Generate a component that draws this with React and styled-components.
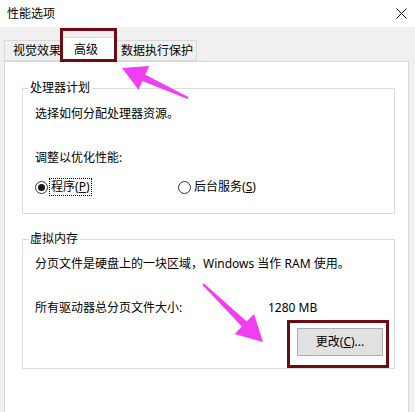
import React from "react";
import styled, { createGlobalStyle } from "styled-components";

const GlobalStyle = createGlobalStyle`
html, body {
  margin: 0;
  padding: 0;
  background: #f0f0f0;
}
body {
  font-family: "Segoe UI", "Noto Sans", "Noto Sans CJK SC", sans-serif;
  font-size: 12px;
  color: #000;
}
`;

function arrowPoints([tx, ty], [px, py], headLen, headWidth, tailW, neckW) {
  const dx = px - tx;
  const dy = py - ty;
  const len = Math.hypot(dx, dy);
  const ux = dx / len;
  const uy = dy / len;
  const nx = -uy;
  const ny = ux;
  const bx = px - ux * headLen;
  const by = py - uy * headLen;
  const pts = [
    [tx + nx * tailW / 2, ty + ny * tailW / 2],
    [bx + nx * neckW / 2, by + ny * neckW / 2],
    [bx + nx * headWidth / 2, by + ny * headWidth / 2],
    [px, py],
    [bx - nx * headWidth / 2, by - ny * headWidth / 2],
    [bx - nx * neckW / 2, by - ny * neckW / 2],
    [tx - nx * tailW / 2, ty - ny * tailW / 2],
  ];
  return pts.map((p) => p.map((v) => v.toFixed(1)).join(",")).join(" ");
}

function Radio({ checked, label, hotkey, focused }) {
  return (
    <RadioItem>
      <RadioCircle>{checked && <RadioDot />}</RadioCircle>
      <RadioLabel $focused={focused}>
        {label}(<u>{hotkey}</u>)
      </RadioLabel>
    </RadioItem>
  );
}

export default function App() {
  return (
    <>
      <GlobalStyle />
      <Window>
        <TitleBar>
          <Title>性能选项</Title>
          <svg width="11" height="11" viewBox="0 0 11 11">
            <path d="M0.5 0.5 L10.5 10.5 M10.5 0.5 L0.5 10.5" stroke="#111" strokeWidth="1" />
          </svg>
        </TitleBar>
        <Body>
          <Tabs>
            <Tab $w={61} $pl={8}>视觉效果</Tab>
            <Tab $w={56} $pl={12} $active>高级</Tab>
            <Tab $w={81} $pl={4}>数据执行保护</Tab>
          </Tabs>
          <Panel>
            <Group $pt={16} $pb={17}>
              <Legend>处理器计划</Legend>
              <Line>选择如何分配处理器资源。</Line>
              <Line $mt={26}>调整以优化性能:</Line>
              <RadioRow>
                <Radio checked label="程序" hotkey="P" focused />
                <Radio label="后台服务" hotkey="S" />
              </RadioRow>
            </Group>
            <Group $mt={25} $pt={15} $pb={12}>
              <Legend>虚拟内存</Legend>
              <Line>分页文件是硬盘上的一块区域，Windows 当作 RAM 使用。</Line>
              <SizeRow>
                <span>所有驱动器总分页文件大小:</span>
                <span>1280 MB</span>
              </SizeRow>
              <Button>
                更改(<u>C</u>)...
              </Button>
            </Group>
          </Panel>
        </Body>
        <Overlay width="415" height="412" viewBox="0 0 415 412">
          <rect x="61.5" y="29.5" width="54" height="31" fill="none" stroke="#6d0c14" strokeWidth="3" />
          <rect x="288.5" y="321.5" width="99" height="45" fill="none" stroke="#6d0c14" strokeWidth="3" />
          <polygon points={arrowPoints([188, 98], [122, 68], 24, 26, 2, 7)} fill="#f23ef2" />
          <polygon points={arrowPoints([203, 284], [263, 342], 26, 28, 2, 7)} fill="#f23ef2" />
        </Overlay>
      </Window>
    </>
  );
}

const Window = styled.div`
position: relative;
width: 415px;
height: 412px;
overflow: hidden;
display: flex;
flex-direction: column;
background: #f0f0f0;`

const TitleBar = styled.div`
height: 27px;
flex-shrink: 0;
background: #fff;
display: flex;
align-items: center;
justify-content: space-between;
padding: 0 8px 0 7px;
box-sizing: border-box;`

const Title = styled.span`
font-size: 12px;
line-height: 16px;`

const Body = styled.div`
flex: 1;
display: flex;
flex-direction: column;
padding: 0 6px 0 4px;`

const Tabs = styled.div`
height: 34px;
display: flex;
align-items: flex-end;
position: relative;
z-index: 1;`

const Tab = styled.div`
position: relative;
z-index: ${(p) => (p.$active ? 2 : 1)};
width: ${(p) => p.$w}px;
height: ${(p) => (p.$active ? 25 : 21)}px;
margin-bottom: ${(p) => (p.$active ? -1 : 0)}px;
margin-left: ${(p) => (p.$active ? -4 : 0)}px;
margin-right: ${(p) => (p.$active ? -1 : 0)}px;
box-sizing: border-box;
border: 1px solid #d9d9d9;
border-bottom: ${(p) => (p.$active ? "none" : "1px solid #d9d9d9")};
background: ${(p) => (p.$active ? "#fff" : "#f0f0f0")};
display: flex;
align-items: center;
padding-left: ${(p) => p.$pl}px;
padding-top: ${(p) => (p.$active ? 0 : 1)}px;
line-height: 16px;
white-space: nowrap;`

const Panel = styled.div`
flex: 1;
background: #fff;
border: 1px solid #d9d9d9;
border-bottom: none;
padding: 26px 13px 0 17px;`

const Group = styled.div`
position: relative;
margin-top: ${(p) => p.$mt || 0}px;
border: 1px solid #dcdcdc;
padding: ${(p) => p.$pt}px 11px ${(p) => p.$pb}px 12px;
display: flex;
flex-direction: column;`

const Legend = styled.span`
position: absolute;
top: -9px;
left: 6px;
padding: 0 2px 0 1px;
background: #fff;
line-height: 16px;`

const Line = styled.div`
line-height: 18px;
margin-top: ${(p) => p.$mt || 0}px;
white-space: nowrap;`

const RadioRow = styled.div`
margin-top: 11px;
display: grid;
grid-template-columns: 143px auto;
height: 18px;
align-items: center;`

const RadioItem = styled.div`
display: flex;
align-items: center;`

const RadioCircle = styled.span`
width: 13px;
height: 13px;
box-sizing: border-box;
border: 1px solid #333;
border-radius: 50%;
display: flex;
align-items: center;
justify-content: center;
margin-right: 2px;`

const RadioDot = styled.span`
width: 7px;
height: 7px;
border-radius: 50%;
background: #1a1a1a;`

const RadioLabel = styled.span`
line-height: 16px;
padding: 0 1px;
outline: ${(p) => (p.$focused ? "1px dotted #000" : "none")};`

const SizeRow = styled.div`
margin-top: 26px;
display: grid;
grid-template-columns: 233px auto;
line-height: 18px;`

const Button = styled.button`
align-self: flex-end;
margin-top: 11px;
width: 86px;
height: 28px;
background: #e1e1e1;
border: 1px solid #adadad;
font: inherit;
color: #000;
padding: 0;
line-height: 16px;`

const Overlay = styled.svg`
position: absolute;
left: 0;
top: 0;
pointer-events: none;
z-index: 5;`
